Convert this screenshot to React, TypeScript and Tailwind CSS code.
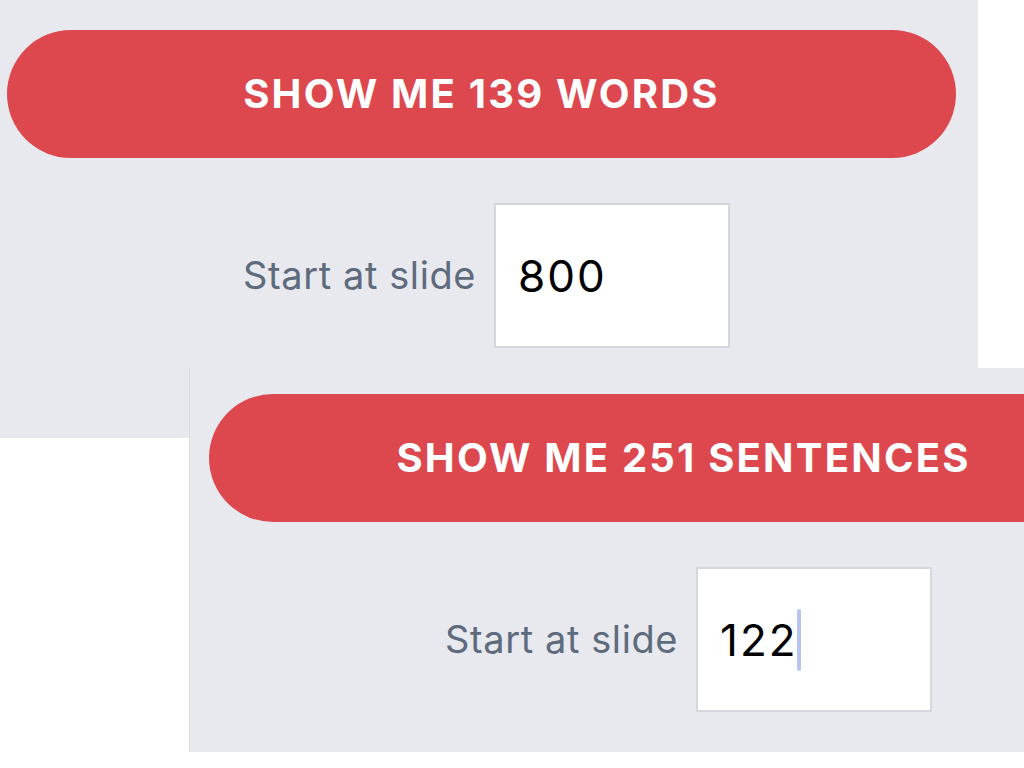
type PanelProps = {
  label: string;
  value: string;
  caret?: boolean;
  className: string;
  padClass: string;
};

function SlidePanel({ label, value, caret, className, padClass }: PanelProps) {
  return (
    <div className={`absolute overflow-hidden bg-[#e8e9ef] ${className}`}>
      <div className={`w-[949px] ${padClass}`}>
        {/* Action button */}
        <button className="flex h-[128px] w-[949px] items-center justify-center rounded-full bg-[#dc484e] text-[40px] font-bold tracking-[2.2px] text-white">
          {label}
        </button>

        {/* Start at slide */}
        <div className="mt-[45px] flex items-center pl-[236px]">
          <span className="w-[231px] whitespace-nowrap text-[38px] tracking-[0.6px] text-[#5e6b7d]">Start at slide</span>
          <div className="ml-[20px] flex h-[145px] w-[236px] items-center border-2 border-[#d6d7dd] bg-white pl-[22px]">
            <span className="text-[44px] leading-none tracking-[2px] text-black">{value}</span>
            {caret && <span className="ml-[-1px] h-[62px] w-[4px] rounded-sm bg-[#b7c4f2]" />}
          </div>
        </div>
      </div>
    </div>
  );
}

export default function App() {
  return (
    <div
      className="relative h-[768px] w-[1024px] overflow-hidden bg-white"
      style={{ fontFamily: "Inter, 'Noto Sans', sans-serif" }}
    >
      <SlidePanel
        className="left-0 top-0 h-[438px] w-[978px]"
        padClass="pl-[7px] pt-[30px]"
        label="SHOW ME 139 WORDS"
        value="800"
      />
      <SlidePanel
        className="left-[189px] top-[368px] h-[384px] w-[835px] border-l border-[#dcdde3]"
        padClass="pl-[19px] pt-[26px]"
        label="SHOW ME 251 SENTENCES"
        value="122"
        caret
      />
    </div>
  );
}
